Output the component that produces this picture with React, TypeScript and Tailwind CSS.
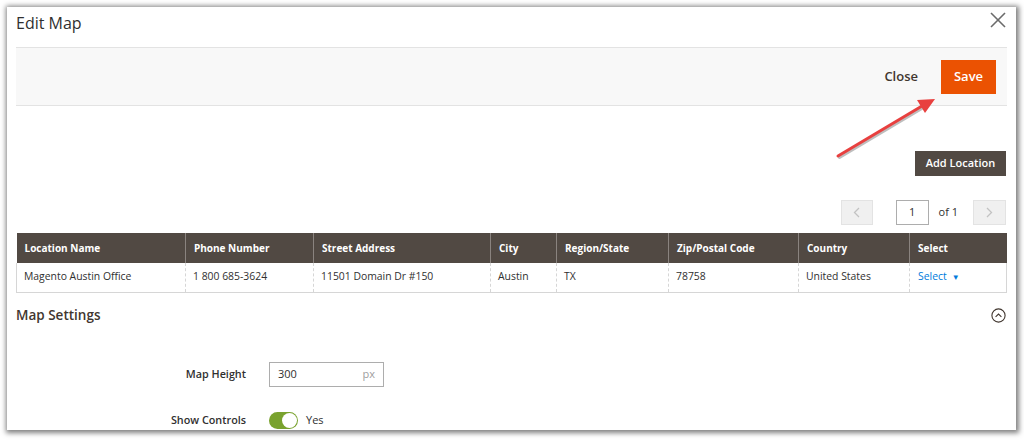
import React from 'react';

const columns = [
    { label: 'Location Name', width: 'w-[169px]' },
    { label: 'Phone Number', width: 'w-[128px]' },
    { label: 'Street Address', width: 'w-[177px]' },
    { label: 'City', width: 'w-[66px]' },
    { label: 'Region/State', width: 'w-[112px]' },
    { label: 'Zip/Postal Code', width: 'w-[130px]' },
    { label: 'Country', width: 'w-[111px]' },
    { label: 'Select', width: 'w-[97px]' },
];

const row = ['Magento Austin Office', '1 800 685-3624', '11501 Domain Dr #150', 'Austin', 'TX', '78758', 'United States'];

const App: React.FC = () => {
    return (
        <div className="relative w-[1024px] h-[440px] bg-white pt-[7px] pl-[7px] font-['Open_Sans',sans-serif] text-[#303030] overflow-hidden">
            {/* Modal panel */}
            <div className="w-[1009px] h-[423px] bg-white overflow-hidden shadow-[1px_1px_5px_2px_rgba(0,0,0,0.5)]">
                {/* Title */}
                <div className="h-[40px] flex items-start justify-between pl-[9px] pr-[10px]">
                    <h1 className="pt-[4px] text-[16px] leading-[24px] text-[#303030]">Edit Map</h1>
                    <svg className="mt-[5px]" width="16" height="16" viewBox="0 0 16 16">
                        <line x1="1" y1="1" x2="15" y2="15" stroke="#6b6b6b" strokeWidth="1.6" />
                        <line x1="15" y1="1" x2="1" y2="15" stroke="#6b6b6b" strokeWidth="1.6" />
                    </svg>
                </div>

                {/* Action toolbar */}
                <div className="mx-[9px] h-[59px] bg-[#f8f8f8] border-y border-[#e3e3e3] flex items-center justify-end pr-[11px]">
                    <span className="text-[13px] font-semibold text-[#41362f] mr-[23px]">Close</span>
                    <button className="w-[55px] h-[34px] bg-[#eb5202] text-white text-[13px] font-semibold">Save</button>
                </div>

                {/* Add location */}
                <div className="flex justify-end pr-[10px] mt-[45px]">
                    <button className="w-[91px] h-[25px] bg-[#514943] text-white text-[11px] font-semibold">Add Location</button>
                </div>

                {/* Pager */}
                <div className="flex justify-end items-center pr-[10px] mt-[24px] h-[25px]">
                    <div className="w-[32px] h-[25px] bg-[#f0f0f0] border border-[#e3e3e3] flex items-center justify-center">
                        <svg width="7" height="11" viewBox="0 0 7 11"><polyline points="6,1 1.5,5.5 6,10" fill="none" stroke="#c2c2c2" strokeWidth="1.3" /></svg>
                    </div>
                    <div className="ml-[23px] w-[33px] h-[25px] border border-[#adadad] bg-white flex items-center justify-center text-[11px]">1</div>
                    <span className="ml-[10px] text-[11px] text-[#303030]">of 1</span>
                    <div className="ml-[15px] w-[33px] h-[25px] bg-[#f0f0f0] border border-[#e3e3e3] flex items-center justify-center">
                        <svg width="7" height="11" viewBox="0 0 7 11"><polyline points="1,1 5.5,5.5 1,10" fill="none" stroke="#c2c2c2" strokeWidth="1.3" /></svg>
                    </div>
                </div>

                {/* Locations grid */}
                <table className="mt-[8px] ml-[9px] table-fixed border-collapse w-[990px] text-[10.4px]">
                    <colgroup>
                        {columns.map((c) => (
                            <col key={c.label} className={c.width} />
                        ))}
                    </colgroup>
                    <thead>
                        <tr className="h-[30px] bg-[#514943]">
                            {columns.map((c, i) => (
                                <th
                                    key={c.label}
                                    className={`text-left font-bold text-[10px] text-white px-[8px] ${i > 0 ? 'border-l border-[#8a837f]' : ''}`}
                                >
                                    {c.label}
                                </th>
                            ))}
                        </tr>
                    </thead>
                    <tbody>
                        <tr className="h-[29px] border-x border-b border-[#d6d6d6]">
                            {row.map((v, i) => (
                                <td key={i} className={`px-[7px] text-[#303030] ${i > 0 ? 'border-l border-dashed border-[#d6d6d6]' : ''}`}>
                                    {v}
                                </td>
                            ))}
                            <td className="px-[8px] border-l border-dashed border-[#d6d6d6]">
                                <span className="text-[#007bdb]">Select</span>
                                <span className="ml-[5px] text-[8px] text-[#007bdb]">▼</span>
                            </td>
                        </tr>
                    </tbody>
                </table>

                {/* Map settings */}
                <div className="mt-[13px] mx-[9px] pr-[1px] flex items-center justify-between h-[20px]">
                    <h2 className="text-[13.5px] font-semibold text-[#41362f]">Map Settings</h2>
                    <svg width="15" height="15" viewBox="0 0 15 15">
                        <circle cx="7.5" cy="7.5" r="6.6" fill="none" stroke="#41362f" strokeWidth="1.1" />
                        <polyline points="4.6,8.8 7.5,6 10.4,8.8" fill="none" stroke="#41362f" strokeWidth="1.1" />
                    </svg>
                </div>

                <div className="ml-[9px] mt-[36px] flex items-center h-[25px]">
                    <label className="w-[230px] text-right text-[10.8px] font-semibold text-[#303030]">Map Height</label>
                    <div className="ml-[23px] w-[115px] h-[25px] border border-[#adadad] flex items-center justify-between px-[8px] text-[11px]">
                        <span>300</span>
                        <span className="text-[#9e9e9e]">px</span>
                    </div>
                </div>

                <div className="ml-[9px] mt-[26px] flex items-center h-[16px]">
                    <label className="w-[230px] text-right text-[10.8px] font-semibold text-[#303030]">Show Controls</label>
                    <div className="ml-[23px] w-[29px] h-[17px] rounded-full bg-[#79a22e] flex items-center justify-end pr-[1px]">
                        <div className="w-[15px] h-[15px] rounded-full bg-white" />
                    </div>
                    <span className="ml-[8px] text-[11px]">Yes</span>
                </div>
            </div>

            {/* Annotation arrow */}
            <svg className="absolute left-0 top-0 pointer-events-none" width="1024" height="440">
                <g opacity="0.25" transform="translate(1.5,1.5)">
                    <line x1="838" y1="156" x2="922" y2="106" stroke="#000" strokeWidth="3" strokeLinecap="round" />
                </g>
                <line x1="838" y1="156" x2="922" y2="106" stroke="#e8403f" strokeWidth="3" strokeLinecap="round" />
                <polygon points="935,99 925,113 917,100" fill="#e8403f" />
            </svg>
        </div>
    );
};

export default App;
